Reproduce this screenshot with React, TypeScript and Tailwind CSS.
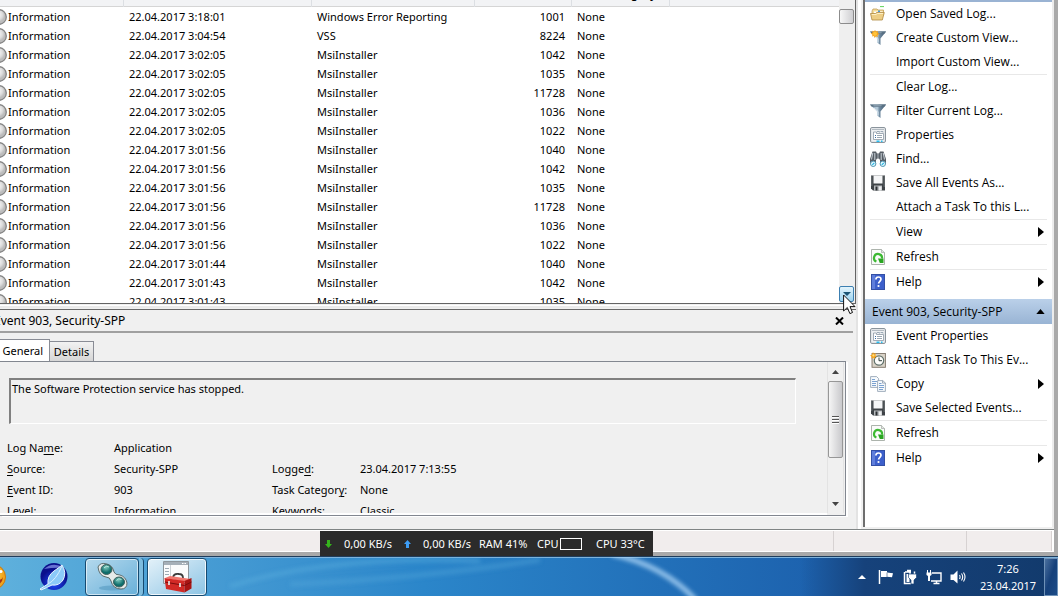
import type { ReactNode } from "react";

type LogEvent = {
  date: string;
  source: string;
  id: number;
};

type IconName = "folder" | "newFilter" | "filter" | "properties" | "find" | "save" | "refresh" | "help" | "task" | "copy";

type Action = {
  label: string;
  icon?: IconName;
  submenu?: boolean;
  divider?: boolean;
};

const events: LogEvent[] = [
  { date: "22.04.2017 3:18:01", source: "Windows Error Reporting", id: 1001 },
  { date: "22.04.2017 3:04:54", source: "VSS", id: 8224 },
  { date: "22.04.2017 3:02:05", source: "MsiInstaller", id: 1042 },
  { date: "22.04.2017 3:02:05", source: "MsiInstaller", id: 1035 },
  { date: "22.04.2017 3:02:05", source: "MsiInstaller", id: 11728 },
  { date: "22.04.2017 3:02:05", source: "MsiInstaller", id: 1036 },
  { date: "22.04.2017 3:02:05", source: "MsiInstaller", id: 1022 },
  { date: "22.04.2017 3:01:56", source: "MsiInstaller", id: 1040 },
  { date: "22.04.2017 3:01:56", source: "MsiInstaller", id: 1042 },
  { date: "22.04.2017 3:01:56", source: "MsiInstaller", id: 1035 },
  { date: "22.04.2017 3:01:56", source: "MsiInstaller", id: 11728 },
  { date: "22.04.2017 3:01:56", source: "MsiInstaller", id: 1036 },
  { date: "22.04.2017 3:01:56", source: "MsiInstaller", id: 1022 },
  { date: "22.04.2017 3:01:44", source: "MsiInstaller", id: 1040 },
  { date: "22.04.2017 3:01:43", source: "MsiInstaller", id: 1042 },
  { date: "22.04.2017 3:01:43", source: "MsiInstaller", id: 1035 },
];

const logActions: Action[] = [
  { label: "Open Saved Log...", icon: "folder" },
  { label: "Create Custom View...", icon: "newFilter" },
  { label: "Import Custom View..." },
  { label: "Clear Log...", divider: true },
  { label: "Filter Current Log...", icon: "filter" },
  { label: "Properties", icon: "properties" },
  { label: "Find...", icon: "find" },
  { label: "Save All Events As...", icon: "save" },
  { label: "Attach a Task To this L..." },
  { label: "View", submenu: true, divider: true },
  { label: "Refresh", icon: "refresh", divider: true },
  { label: "Help", icon: "help", submenu: true, divider: true },
];

const eventActions: Action[] = [
  { label: "Event Properties", icon: "properties" },
  { label: "Attach Task To This Ev...", icon: "task" },
  { label: "Copy", icon: "copy", submenu: true },
  { label: "Save Selected Events...", icon: "save" },
  { label: "Refresh", icon: "refresh", divider: true },
  { label: "Help", icon: "help", submenu: true, divider: true },
];

const funnel = (
  <>
    <path d="M0 1.500h16L10.500 8.500v6.500l-3.500-2.500V8.500z" fill="url(#funnel)" />
    <path d="M0 1.500h16l-1.500 2.200H1.700z" fill="#5b7284" />
    <path d="M3 2.200h9l-1 1H4z" fill="#93a9b8" />
    <path d="M4 5l4 3.500v4" fill="none" stroke="#dfeaf2" strokeWidth="1" />
  </>
);

const drawings: Record<IconName, ReactNode> = {
  folder: (
    <>
      <path d="M10 .6h4" stroke="#5fd35a" />
      <path d="M2 5l1-2h4l1 1h5.500V9H2z" fill="#f3dc9a" stroke="#b9924a" strokeWidth=".7" />
      <path d="M4 5.500h8.500v3H4z" fill="#fff" />
      <path d="M8 4.500h2v1.500H8z" fill="#4c9ad6" />
      <path d="M.5 7.500h5l1-1h7.800L12.300 14H2z" fill="#edce85" stroke="#b08a42" strokeWidth=".8" />
      <path d="M1.800 8.500h4.500l1-1h5.700" fill="none" stroke="#fff3cb" strokeWidth=".9" />
    </>
  ),
  newFilter: (
    <>
      {funnel}
      <path d="M5 0l1 1.500L8 1l-.3 2L9.500 4l-2 1 .3 2.200L6 6.200 4.500 8 4 6 2 6.500 2.500 4.700.8 3.500l1.700-.7L2 .8l2 .7z" fill="#f7a51c" />
      <circle cx="5" cy="3.800" r="2" fill="#ffc43c" />
    </>
  ),
  filter: funnel,
  properties: (
    <>
      <rect x=".6" y=".6" width="14.800" height="14.800" rx="1.200" fill="#eef0f2" stroke="#7e8992" />
      <path d="M2 2.500h12" stroke="#b3bbc2" />
      <path d="M3.500 5h3v1.500h7V12.500h-10z" fill="#fff" stroke="#8b98a5" strokeWidth=".8" />
      <path d="M7 4.500h2.500v1M10.500 4.500h2.500v1" fill="none" stroke="#9aa8b5" />
      <path d="M5 8.500h1M5 10.500h1" stroke="#3a6fa8" />
      <path d="M7 8.500h5M7 10.500h5" stroke="#8292a0" strokeWidth=".8" />
      <path d="M6.500 14.200h3M11 14.200h1.500" stroke="#27bdf0" strokeWidth="1.400" />
    </>
  ),
  find: (
    <>
      <path d="M2.500.5h3.500l1 2h2l1-2h3.500L16 8v5h-6V9L9 7.500H7L6 9v4H0V8z" fill="#565d65" />
      <path d="M2.800 2L1.500 8.500M4.800 2v7M11.200 2v7M13.200 2l1.300 6.500" stroke="#c3cbd2" strokeWidth="1.100" />
      <path d="M7 4h2M7 6h2" stroke="#aab3ba" />
      <circle cx="3.200" cy="12.800" r="2.700" fill="#e2f7fd" stroke="#4f94b0" />
      <circle cx="12.800" cy="12.800" r="2.700" fill="#e2f7fd" stroke="#4f94b0" />
      <path d="M2.300 13.800l2-2M11.800 13.800l2-2" stroke="#22b4e6" strokeWidth="1.200" />
    </>
  ),
  save: (
    <>
      <path d="M1 .5h14v15H3l-2-2z" fill="#3e4347" />
      <path d="M3.500 .5h9v8h-9z" fill="#f5f6f7" />
      <path d="M1.800 1v10M14.200 1v11" stroke="#84898d" strokeWidth=".7" />
      <path d="M4 10.500h8v5H4z" fill="#b8bcbf" />
      <path d="M5.500 11.500h2v4h-2z" fill="#2b2f32" />
      <path d="M9 11.500h2.500v4H9z" fill="#edeeef" />
    </>
  ),
  refresh: (
    <>
      <path d="M1.500 .5h10l3 3v12h-13z" fill="#fafbfa" stroke="#a3aaa3" strokeWidth=".9" />
      <path d="M11.500 .5v3h3" fill="#e1e6e1" stroke="#a3aaa3" strokeWidth=".7" />
      <path d="M6.400 12.600A4 4 0 1 1 12 9.500" fill="none" stroke="#3cb932" strokeWidth="2.200" />
      <path d="M8 9.500h5.500v4.500H9.800z" fill="#2aa522" />
    </>
  ),
  help: (
    <>
      <rect x="1.500" y=".5" width="13" height="15" fill="#3c5fcb" stroke="#3450a5" />
      <path d="M2 1h3v14H2z" fill="#5f7edb" />
      <path d="M5.900 5.600C5.900 3.600 7 3 8.400 3c1.600 0 2.600.9 2.600 2.300 0 1.900-2.400 2.100-2.400 4.200" fill="none" stroke="#fff" strokeWidth="1.700" />
      <circle cx="8.500" cy="12" r="1.100" fill="#fff" />
    </>
  ),
  task: (
    <>
      <rect x="2" y="1.500" width="13.400" height="13.800" fill="#d9d3c8" stroke="#7d7468" strokeWidth=".9" />
      <circle cx="9" cy="8.500" r="4.700" fill="#fdfdfb" stroke="#60716b" strokeWidth="1.200" />
      <path d="M9 5.500v3.200h3" fill="none" stroke="#30413c" />
      <path d="M3 0l.8 1.800L6 1.200l-.8 2L7 4.500l-2 .6v2L3.300 5.800 1.300 6.700l.4-2L0 3.500l1.900-.7z" fill="#f6a31d" />
      <circle cx="3.400" cy="3.400" r="1.100" fill="#ffe07c" />
    </>
  ),
  copy: (
    <>
      <path d="M.6.600h6l2 2v8.800h-8z" fill="#f7fafd" stroke="#8a9bac" strokeWidth=".8" />
      <path d="M2 3.500h3M2 5.500h5M2 7.500h4M2 9.500h4" stroke="#5b8cc4" strokeWidth=".8" />
      <path d="M7.600 4.600h5.200l2.600 2.400v8.400H7.600z" fill="#f7fafd" stroke="#8a9bac" strokeWidth=".8" />
      <path d="M12.500 4.600v2.500h3" fill="none" stroke="#8a9bac" strokeWidth=".8" />
      <path d="M9 7.500h2.500M9 9.500h5M9 11.500h5M9 13.500h4" stroke="#5b8cc4" strokeWidth=".8" />
    </>
  ),
};

function Gradients() {
  return (
    <svg className="absolute h-0 w-0" aria-hidden="true">
      <defs>
        <linearGradient id="funnel">
          <stop offset="0" stopColor="#7e99ae" />
          <stop offset=".45" stopColor="#b9cedd" />
          <stop offset=".6" stopColor="#6f8aa0" />
          <stop offset="1" stopColor="#3d566d" />
        </linearGradient>
        <radialGradient id="bubble" cx=".4" cy=".35">
          <stop offset="0" stopColor="#fff" />
          <stop offset=".7" stopColor="#dadada" />
          <stop offset="1" stopColor="#bcbcbc" />
        </radialGradient>
        <radialGradient id="smiley" cx=".4" cy=".4">
          <stop offset="0" stopColor="#fff27a" />
          <stop offset="1" stopColor="#f0a51c" />
        </radialGradient>
        <radialGradient id="globe" cx=".5" cy=".75">
          <stop offset="0" stopColor="#1e4dff" />
          <stop offset="1" stopColor="#0a0f8c" />
        </radialGradient>
        <radialGradient id="lens" cx=".45" cy=".3">
          <stop offset="0" stopColor="#7cc9bd" />
          <stop offset="1" stopColor="#0f6d6b" />
        </radialGradient>
      </defs>
    </svg>
  );
}

function Icon({ name }: { name: IconName }) {
  return (
    <svg viewBox="0 0 16 16" className="h-4 w-4" aria-hidden="true">
      {drawings[name]}
    </svg>
  );
}

function ActionList({ actions }: { actions: Action[] }) {
  return (
    <ul className="px-[5px]">
      {actions.map((action) => (
        <li key={action.label} className={action.divider ? "border-t border-[#e8e8e8]" : ""}>
          <button type="button" className="flex h-6 w-full items-center text-left">
            <span className="mr-2.5 h-4 w-4 shrink-0">{action.icon && <Icon name={action.icon} />}</span>
            <span className="flex-1 truncate">{action.label}</span>
            {action.submenu && (
              <svg viewBox="0 0 6 10" className="mr-[3px] h-2.5 w-1.5 shrink-0" aria-hidden="true">
                <path d="M0 0l6 5-6 5z" />
              </svg>
            )}
          </button>
        </li>
      ))}
    </ul>
  );
}

function ActionsPane() {
  return (
    <aside className="mb-0.5 w-[191px] shrink-0 overflow-hidden border-r-2 border-l-2 border-r-[#ececec] border-l-[#6e6e6e] bg-white font-['Open_Sans','Noto_Sans',sans-serif] text-[12px] leading-4">
      <div className="h-0.5 bg-[#9ab3d3]" />
      <ActionList actions={logActions} />
      <button
        type="button"
        className="mt-[5px] flex h-[25px] w-full items-center justify-between bg-linear-to-b from-[#bad0e9] to-[#99b4d4] px-[7px] text-left"
      >
        Event 903, Security-SPP
        <svg viewBox="0 0 10 6" className="h-[5px] w-[9px]" aria-hidden="true">
          <path d="M0 6l5-6 5 6z" />
        </svg>
      </button>
      <ActionList actions={eventActions} />
    </aside>
  );
}

function EventTable() {
  return (
    <table className="-mt-[18px] w-full table-fixed border-collapse">
      <colgroup>
        <col className="w-[123px]" />
        <col className="w-[188px]" />
        <col className="w-[163px]" />
        <col className="w-[97px]" />
        <col className="w-[98px]" />
        <col />
      </colgroup>
      <thead>
        <tr className="h-6 border-b border-[#d5d5d5] bg-[#f2f3f5] text-left text-[12px]">
          {["Level", "Date and Time", "Source", "Event ID", "Task Category"].map((title) => (
            <th key={title} scope="col" className="border-r border-[#dcdfe3] pl-1.5 font-normal whitespace-nowrap">
              {title}
            </th>
          ))}
          <td />
        </tr>
      </thead>
      <tbody className="before:block before:h-px">
        {events.map((event, index) => (
          <tr key={index} className="h-[19px] whitespace-nowrap">
            <td>
              <span className="flex items-center gap-px">
                <svg viewBox="0 0 16 16" className="-ml-[9px] h-4 w-4 shrink-0" aria-hidden="true">
                  <circle cx="8" cy="8" r="7.300" fill="url(#bubble)" stroke="#858585" strokeWidth="1.300" />
                </svg>
                Information
              </span>
            </td>
            <td className="pl-1.5">{event.date}</td>
            <td className="pl-1.5">{event.source}</td>
            <td className="pr-1.5 text-right">{event.id}</td>
            <td className="pl-1.5">None</td>
            <td />
          </tr>
        ))}
      </tbody>
    </table>
  );
}

function Cursor() {
  return (
    <svg viewBox="0 0 13 21" className="absolute top-[7px] left-[3px] z-10 h-[21px] w-[13px]" aria-hidden="true">
      <path d="M.6 1v16l3.700-3.500 2.600 6.100 2.600-1.100L7 12.600h5z" fill="#fff" stroke="#111" />
    </svg>
  );
}

function EventList() {
  return (
    <section className="relative flex min-h-0 flex-1 border-r border-b border-[#646464] bg-white">
      <div className="min-w-0 flex-1 overflow-hidden">
        <EventTable />
      </div>
      <div className="flex w-4 shrink-0 flex-col justify-between bg-[#efefef] pt-[9px] pb-px">
        <button
          type="button"
          aria-label="Scroll position"
          className="h-[15px] w-[15px] rounded-xs border border-[#8c8c8c] bg-linear-to-r from-[#f7f7f7] to-[#cfcfd2]"
        />
        <button
          type="button"
          aria-label="Scroll down"
          className="relative flex h-4 w-[15px] items-center justify-center rounded-xs border border-[#3c7fb1] bg-linear-to-b from-[#e3f4fc] to-[#9bd3ef]"
        >
          <svg viewBox="0 0 8 4" className="h-1 w-2" aria-hidden="true">
            <path d="M0 0h8L4 4z" fill="#1b5575" />
          </svg>
          <Cursor />
        </button>
      </div>
    </section>
  );
}

function Hot({ children }: { children: string }) {
  return <span className="underline underline-offset-2">{children}</span>;
}

function EventFields() {
  return (
    <dl className="mt-[13px] grid grid-cols-[107px_158px_88px_1fr] pl-[7px] leading-[21px] whitespace-nowrap">
      <dt>
        Log Na<Hot>m</Hot>e:
      </dt>
      <dd className="col-span-3">Application</dd>
      <dt>
        <Hot>S</Hot>ource:
      </dt>
      <dd>Security-SPP</dd>
      <dt>
        Logge<Hot>d</Hot>:
      </dt>
      <dd>23.04.2017 7:13:55</dd>
      <dt>
        <Hot>E</Hot>vent ID:
      </dt>
      <dd>903</dd>
      <dt>
        Task Categor<Hot>y</Hot>:
      </dt>
      <dd>None</dd>
      <dt>
        <Hot>L</Hot>evel:
      </dt>
      <dd>Information</dd>
      <dt>
        <Hot>K</Hot>eywords:
      </dt>
      <dd>Classic</dd>
    </dl>
  );
}

function DetailsScrollBar() {
  return (
    <div className="mr-px mb-0.5 flex w-[17px] shrink-0 flex-col items-center border-r border-l border-[#e3e3e3] bg-[#f0f0f0] pt-px">
      <button type="button" aria-label="Scroll up" className="flex h-[18px] w-full items-center justify-center">
        <svg viewBox="0 0 7 4" className="h-1 w-[7px]" aria-hidden="true">
          <path d="M0 4h7L3.500 0z" fill="#444" />
        </svg>
      </button>
      <button
        type="button"
        aria-label="Scroll position"
        className="flex h-[77px] w-[15px] flex-col items-center justify-center gap-px rounded-xs border border-[#979797] bg-linear-to-r from-[#f5f5f5] to-[#c9c9cc]"
      >
        <span className="h-0.5 w-[7px] border-b border-white bg-[#555]" />
        <span className="h-0.5 w-[7px] border-b border-white bg-[#555]" />
        <span className="h-0.5 w-[7px] border-b border-white bg-[#555]" />
      </button>
      <button type="button" aria-label="Scroll down" className="mt-auto flex h-[18px] w-full items-center justify-center">
        <svg viewBox="0 0 7 4" className="h-1 w-[7px]" aria-hidden="true">
          <path d="M0 0h7L3.500 4z" fill="#444" />
        </svg>
      </button>
    </div>
  );
}

function EventDetails() {
  return (
    <section className="flex h-[220px] shrink-0 flex-col border-t border-[#696969] pb-[13px]">
      <header className="mr-[3px] flex h-[23px] shrink-0 items-center justify-between overflow-hidden border-b-2 border-[#a0a0a0] pr-[9px]">
        <h2 className="-ml-[6px] text-[12px]">Event 903, Security-SPP</h2>
        <button type="button" aria-label="Close preview">
          <svg viewBox="0 0 9 8" className="h-2 w-[9px]" aria-hidden="true">
            <path d="M1 .5l7 7M8 .5l-7 7" stroke="#000" strokeWidth="2" />
          </svg>
        </button>
      </header>
      <div role="tablist" className="mt-1.5 flex h-[22px] shrink-0 items-end">
        <button
          type="button"
          role="tab"
          aria-selected="true"
          className="h-[22px] w-[50px] border-t border-r border-[#898c95] bg-white pr-1.5 text-right"
        >
          General
        </button>
        <button
          type="button"
          role="tab"
          aria-selected="false"
          className="h-5 w-11 border-t border-r border-[#898c95] bg-linear-to-b from-[#f2f2f2] to-[#d6d6d6]"
        >
          Details
        </button>
      </div>
      <div role="tabpanel" className="mr-[10px] flex min-h-0 flex-1 border-t border-r border-b border-[#828790] shadow-[2px_1px_0_#fff]">
        <div className="min-w-0 flex-1 overflow-hidden border-b-2 border-white pt-4">
          <textarea
            readOnly
            aria-label="Description"
            className="mr-[31px] ml-[9px] block h-[46px] w-[calc(100%-40px)] resize-none border-t-2 border-r border-b border-l-2 border-t-[#808080] border-r-white border-b-white border-l-[#808080] bg-[#f0f0f0] px-px py-px outline-none"
            defaultValue="The Software Protection service has stopped."
          />
          <EventFields />
        </div>
        <DetailsScrollBar />
      </div>
    </section>
  );
}

function StatusBar() {
  return (
    <footer className="flex h-[23px] shrink-0 border-t border-[#808585] bg-white py-px pr-0.5">
      <div className="flex-1 border-r border-[#d7d2d2] bg-[#f1eded]" />
      <div className="w-[133px] border-r border-[#d7d2d2] bg-[#f1eded]" />
      <div className="w-[85px] border-r border-[#d7d2d2] bg-[#f1eded]" />
    </footer>
  );
}

// small always-on-top network and load meter, parked on the taskbar edge
function LoadMeter() {
  return (
    <div className="absolute bottom-10 left-80 flex h-[25px] w-[333px] items-center bg-[#2b2b2b] pl-[5px] whitespace-nowrap text-white">
      <svg viewBox="0 0 7 8" className="h-2 w-[7px]" aria-hidden="true">
        <path d="M2 0h3v4h2L3.500 8 0 4h2z" fill="#35b41c" />
      </svg>
      <span className="ml-3 w-[60px]">0,00 KB/s</span>
      <svg viewBox="0 0 7 8" className="h-2 w-[7px]" aria-hidden="true">
        <path d="M2 8h3V4h2L3.500 0 0 4h2z" fill="#3d9df5" />
      </svg>
      <span className="ml-3 w-14">0,00 KB/s</span>
      <span className="w-[58px]">RAM 41%</span>
      <span className="w-[23px]">CPU</span>
      <span className="h-3 w-[22px] border border-white" />
      <span className="ml-3.5">CPU 33°C</span>
    </div>
  );
}

function Tray() {
  return (
    <div className="flex items-center text-white">
      <button type="button" aria-label="Show hidden icons" className="mr-3">
        <svg viewBox="0 0 8 4" className="h-1 w-2" aria-hidden="true">
          <path d="M0 4l4-4 4 4z" fill="#fff" />
        </svg>
      </button>
      <button type="button" aria-label="Action Center" className="mr-2">
        <svg viewBox="0 0 16 16" className="h-4 w-4" aria-hidden="true">
          <path d="M1.500 1v14" stroke="#fff" strokeWidth="1.500" />
          <path d="M3 2h6v1.500l6 .8-1 4-5-.5L8.500 8H3z" fill="#fff" />
          <path d="M9 3.500v4.500" stroke="#7f93ad" />
        </svg>
      </button>
      <button type="button" aria-label="Power" className="mr-2">
        <svg viewBox="0 0 16 16" className="h-4 w-4" aria-hidden="true">
          <path d="M5 1.500h4M3 3h6M2.500 3v11.500H9" fill="none" stroke="#fff" strokeWidth="1.500" />
          <path d="M4.500 5h3v8h-3z" fill="#fff" />
          <path d="M8 2.500v3M12.500 2.500v3" stroke="#fff" strokeWidth="1.500" />
          <path d="M6.500 5h8v3.500L12 11v4h-3v-4L6.500 8.500z" fill="#fff" stroke="#17437a" strokeWidth=".7" />
        </svg>
      </button>
      <button type="button" aria-label="Network" className="mr-2">
        <svg viewBox="0 0 16 16" className="h-4 w-4" aria-hidden="true">
          <path d="M6 4h9v8H5" fill="none" stroke="#fff" strokeWidth="1.400" />
          <path d="M7.500 14.500h6M10.500 12v2.500" stroke="#fff" strokeWidth="1.500" />
          <path d="M1.500 1v3M4.500 1v3" stroke="#fff" />
          <path d="M.5 3.500h5v2.500l-1.500 1v5h-2V7l-1.500-1z" fill="#fff" />
        </svg>
      </button>
      <button type="button" aria-label="Volume" className="mr-3">
        <svg viewBox="0 0 16 16" className="h-4 w-4" aria-hidden="true">
          <path d="M.5 5.500h3L7.500 1.500v13L3.500 11h-3z" fill="#fff" />
          <path d="M9.500 6q1.200 2 0 4M11.500 4.500q2.400 3.500 0 7M13.500 3.500q3 4.500 0 9" fill="none" stroke="#fff" strokeWidth="1.100" />
        </svg>
      </button>
      <time className="w-[60px] text-center leading-[17px]">
        7:26
        <br />
        23.04.2017
      </time>
      <button
        type="button"
        aria-label="Show desktop"
        className="ml-1.5 h-[38px] w-3.5 border border-[#6f92b8] bg-linear-to-br from-[#4a709e] via-[#15407a] to-[#1c4c88]"
      />
    </div>
  );
}

function Taskbar() {
  return (
    <nav className="relative flex h-10 shrink-0 items-center justify-between overflow-hidden border-t border-[#1f3d5c] bg-linear-to-r from-[#5eb0dc] from-0% via-[#2b86ca] via-40% to-[#1d62ae] to-77% inset-shadow-[0_1px_0_#7eb3dc]">
      {/* wallpaper glow seen through the glass */}
      <svg viewBox="0 0 1058 40" preserveAspectRatio="none" className="absolute inset-0 h-full w-full" aria-hidden="true">
        <defs>
          <linearGradient id="shade">
            <stop offset="0" stopColor="#16427b" stopOpacity="0" />
            <stop offset=".25" stopColor="#16427b" />
            <stop offset="1" stopColor="#123a6c" />
          </linearGradient>
          <filter id="soft" x="-20%" y="-50%" width="140%" height="200%">
            <feGaussianBlur stdDeviation="2" />
          </filter>
        </defs>
        <path d="M800 1h258v39H800z" fill="url(#shade)" />
        <g filter="url(#soft)" fill="none">
          <path d="M230 30Q330 -2 480 4" stroke="#5db1e0" strokeWidth="4" opacity=".5" />
          <path d="M290 28Q420 22 540 3" stroke="#57a9dd" strokeWidth="5" opacity=".4" />
          <path d="M612 -3Q662 8 696 44" stroke="#a9d2f5" strokeWidth="5" opacity=".85" />
        </g>
      </svg>
      <div className="relative flex h-full items-center">
        <button type="button" aria-label="Messenger" className="-ml-[21px]">
          <svg viewBox="0 0 28 28" className="h-7 w-7" aria-hidden="true">
            <circle cx="14" cy="14" r="12.500" fill="url(#smiley)" stroke="#c8780f" />
            <path d="M19 17q4 0 5-3-.5 7-7 8z" fill="#a3361a" />
            <circle cx="22" cy="8.500" r="1.500" fill="#fff" />
          </svg>
        </button>
        <button type="button" aria-label="Browser" className="ml-8">
          <svg viewBox="0 0 30 30" className="h-[30px] w-[30px]" aria-hidden="true">
            <circle cx="15" cy="14.500" r="13.500" fill="url(#globe)" />
            <path d="M5 7Q14-1 25 6q-9-1-20 1z" fill="#8d9df0" opacity=".7" />
            <path d="M1 27l8-5q-1-8 6-13 6-4 8-6 5 8 1 15-4 6-11 5-6 3-11 5z" fill="#8ccaf8" stroke="#e9f5ff" />
            <path d="M9 22Q17 18 23 4" fill="none" stroke="#d8efff" />
          </svg>
        </button>
        <button
          type="button"
          aria-label="Media application"
          className="ml-4 flex h-[38px] w-[54px] items-center justify-center rounded-sm border border-[#164a70] bg-linear-to-br from-[#b4d9ed] to-[#68b0d9] inset-ring inset-ring-white/60"
        >
          <svg viewBox="0 0 32 30" className="h-[30px] w-8" aria-hidden="true">
            <ellipse cx="16" cy="26" rx="13" ry="2.500" fill="#4b91b9" opacity=".5" />
            <path d="M2 5q2-5 9-3 6 2 7 8 1 3 6 3 6 2 7 8 0 6-6 6-8 0-10-8-1-4-5-4-7-1-8-10z" fill="#e7ebe9" stroke="#5d6d6d" />
            <ellipse cx="10.500" cy="7.500" rx="5.500" ry="5" fill="url(#lens)" stroke="#40605e" />
            <ellipse cx="23" cy="20" rx="5.500" ry="5" fill="url(#lens)" stroke="#40605e" />
            <path d="M8 6q2-3 5-1M20.500 18.500q2-3 5-1" fill="none" stroke="#bfeadf" />
          </svg>
        </button>
        <span className="h-[38px] w-[5px] rounded-r-sm border-r border-[#164a70] bg-[#7dbcdf]" />
        <button
          type="button"
          aria-label="Event Viewer"
          className="ml-[3px] flex h-[38px] w-[60px] items-center justify-center rounded-sm border border-[#164a70] bg-linear-to-br from-[#e3f1f9] to-[#8cc4e4] inset-ring inset-ring-white/80"
        >
          <svg viewBox="0 0 32 34" className="h-[34px] w-8" aria-hidden="true">
            <path d="M2.500 1.500h25v22h-25z" fill="#fafbfc" stroke="#8d969d" />
            <path d="M3 2h24v3H3z" fill="#a5afb8" />
            <path d="M21 3.500h1.500M23.500 3.500H25" stroke="#fff" />
            <path d="M4 8.500h4M4 11.500h4M4 14.500h4" stroke="#9eaab4" />
            <path d="M9.500 5v18" stroke="#ccd2d7" />
            <path d="M12 17q1-4 6-3 4 0 4 4" fill="none" stroke="#3a3a3a" strokeWidth="1.800" />
            <path d="M4 18l5-2 21 3-6 3z" fill="#f0766e" />
            <path d="M3.500 18l20 3v11.500L5 29z" fill="#d22a26" />
            <path d="M23.500 21l7-3v10.500l-7 4z" fill="#a81513" />
            <path d="M3.700 22l19.800 3.500 7-3.500" fill="none" stroke="#7b0d0c" />
            <path d="M8 21v4M19 23v4" stroke="#e8e8e8" strokeWidth="1.700" />
          </svg>
        </button>
      </div>
      <div className="relative">
        <Tray />
      </div>
    </nav>
  );
}

export default function App() {
  return (
    <div className="relative flex h-screen flex-col overflow-hidden bg-[#a9a9a9] font-['Noto_Sans','Open_Sans',sans-serif] text-[11px] leading-4 text-black">
      <Gradients />
      <main className="mr-1 mb-1 flex min-h-0 flex-1 flex-col bg-[#f0f0f0]">
        <div className="flex min-h-0 flex-1">
          <div className="flex min-w-0 flex-1 flex-col overflow-hidden">
            <EventList />
            <div className="my-px h-[3px] shrink-0 border-t border-white bg-[#ebebeb]" />
            <EventDetails />
          </div>
          <div className="w-[7px] shrink-0 border-r-2 border-l-2 border-r-[#f0f0f0] border-l-[#e3e3e3] bg-white" />
          <ActionsPane />
        </div>
        <StatusBar />
      </main>
      <LoadMeter />
      <Taskbar />
    </div>
  );
}
